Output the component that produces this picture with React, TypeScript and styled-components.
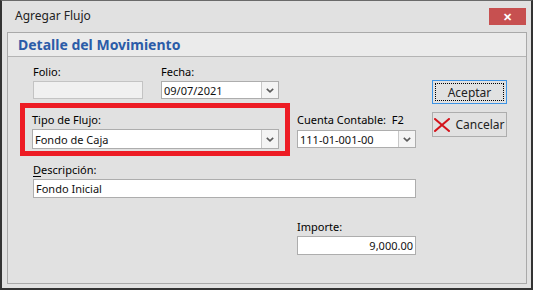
import styled, { createGlobalStyle } from "styled-components";

const GlobalStyle = createGlobalStyle`
  html, body {
    margin: 0;
    padding: 0;
    background: #e1e1e1;
  }
  body {
    font-family: "Noto Sans", "Open Sans", sans-serif;
    font-size: 11px;
    color: #000;
  }
`;

const Window = styled.div`
  width: 533px;
  height: 290px;
  box-sizing: border-box;
  background: #e1e1e1;
  border-top: 1px solid #6a6a6a;
  border-left: 2px solid #333;
  border-right: 2px solid #333;
  border-bottom: 2px solid #333;
  display: flex;
  flex-direction: column;
  overflow: hidden;
`;

const TitleBar = styled.div`
  height: 31px;
  display: flex;
  align-items: flex-start;
  justify-content: space-between;
  padding: 0 5px 0 13px;
`;

const Title = styled.span`
  font-size: 12px;
  line-height: 16px;
  margin-top: 7px;
  color: #222;
`;

const CloseButton = styled.div`
  width: 37px;
  height: 17px;
  margin-top: 7px;
  background: #c75050;
  display: flex;
  align-items: center;
  justify-content: center;
  color: #fff;
  font-weight: bold;
  font-size: 11px;
  line-height: 1;
`;

const Panel = styled.div`
  margin: 0 4px 0 5px;
  height: 250px;
  border: 1px solid #a9a9a9;
  display: flex;
  flex-direction: column;
`;

const PanelHeader = styled.div`
  height: 23px;
  background: #ebebeb;
  border-bottom: 1px solid #b4b4b4;
  padding-left: 10px;
  display: flex;
  align-items: center;
`;

const Heading = styled.span`
  font-size: 14px;
  font-weight: bold;
  color: #2b5ca8;
  line-height: 18px;
`;

const Body = styled.div`
  display: flex;
  padding: 7px 0 0 25px;
  gap: 16px;
`;

const FormArea = styled.div`
  width: 383px;
  display: flex;
  flex-direction: column;
`;

const Row = styled.div<{ $top?: number; $indent?: number }>`
  display: flex;
  align-items: flex-start;
  margin-top: ${(p) => p.$top ?? 0}px;
  margin-left: ${(p) => p.$indent ?? 0}px;
`;

const Field = styled.div<{ $w: number; $gap?: number; $top?: number }>`
  width: ${(p) => p.$w}px;
  display: flex;
  flex-direction: column;
  gap: ${(p) => p.$gap ?? 1}px;
  margin-top: ${(p) => p.$top ?? 0}px;
`;

const Label = styled.label`
  font-size: 11px;
  line-height: 16px;
  padding-left: 0;
  white-space: nowrap;
  u {
    text-decoration: underline;
    text-underline-offset: 2px;
  }
`;

const Box = styled.div<{ $h: number; $disabled?: boolean; $right?: boolean }>`
  height: ${(p) => p.$h}px;
  box-sizing: border-box;
  border: 1px solid ${(p) => (p.$disabled ? "#c3c3c3" : "#adadad")};
  background: ${(p) => (p.$disabled ? "#f0f0f0" : "#fff")};
  display: flex;
  align-items: stretch;
  font-size: 11px;
`;

const BoxText = styled.span<{ $right?: boolean }>`
  flex: 1;
  display: flex;
  align-items: center;
  justify-content: ${(p) => (p.$right ? "flex-end" : "flex-start")};
  padding: 0 2px;
  white-space: nowrap;
  color: #111;
`;

const DropButton = styled.span`
  width: 16px;
  border-left: 1px solid #c8c8c8;
  background: #f4f4f4;
  display: flex;
  align-items: center;
  justify-content: center;
`;

const Highlight = styled.div`
  width: 270px;
  box-sizing: border-box;
  margin-left: -13px;
  border: 5px solid #ed1c24;
  padding: 4px 6px 2px 7px;
`;

const Buttons = styled.div`
  width: 75px;
  margin-top: 16px;
  display: flex;
  flex-direction: column;
  gap: 8px;
`;

const Button = styled.div<{ $focused?: boolean }>`
  height: ${(p) => (p.$focused ? 24 : 25)}px;
  box-sizing: border-box;
  background: #e1e1e1;
  border: 1px solid ${(p) => (p.$focused ? "#3c93e4" : "#adadad")};
  padding: ${(p) => (p.$focused ? "2px" : "0")};
  display: flex;
  font-size: 12px;
  color: #222;
`;

const ButtonFace = styled.span<{ $focused?: boolean }>`
  flex: 1;
  display: flex;
  align-items: center;
  justify-content: center;
  gap: 5px;
  border: 1px dotted ${(p) => (p.$focused ? "#000" : "transparent")};
`;

function Chevron() {
  return (
    <svg width="8" height="5" viewBox="0 0 8 5">
      <path d="M0.8 0.8 L4 3.8 L7.2 0.8" fill="none" stroke="#5a5a5a" strokeWidth="1.6" />
    </svg>
  );
}

function RedX() {
  return (
    <svg width="16" height="14" viewBox="0 0 16 14">
      <path d="M1 1 L15 13 M15 1 L1 13" stroke="#d4131b" strokeWidth="2" strokeLinecap="square" />
    </svg>
  );
}

function Combo({ value, h }: { value: string; h: number }) {
  return (
    <Box $h={h}>
      <BoxText>{value}</BoxText>
      <DropButton>
        <Chevron />
      </DropButton>
    </Box>
  );
}

export default function App() {
  return (
    <>
      <GlobalStyle />
      <Window>
        <TitleBar>
          <Title>Agregar Flujo</Title>
          <CloseButton>✕</CloseButton>
        </TitleBar>
        <Panel>
          <PanelHeader>
            <Heading>Detalle del Movimiento</Heading>
          </PanelHeader>
          <Body>
            <FormArea>
              <Row>
                <Field $w={110}>
                  <Label>Folio:</Label>
                  <Box $h={18} $disabled />
                </Field>
                <Field $w={118} style={{ marginLeft: 18 }}>
                  <Label>Fecha:</Label>
                  <Combo value="09/07/2021" h={18} />
                </Field>
              </Row>
              <Row $top={4}>
                <Highlight>
                  <Field $w={247}>
                    <Label>Tipo de Flujo:</Label>
                    <Combo value="Fondo de Caja" h={20} />
                  </Field>
                </Highlight>
                <Field $w={119} $top={9} $gap={2} style={{ marginLeft: 7 }}>
                  <Label>Cuenta Contable:&nbsp; F2</Label>
                  <Combo value="111-01-001-00" h={18} />
                </Field>
              </Row>
              <Row $top={6}>
                <Field $w={383}>
                  <Label>
                    <u>D</u>escripción:
                  </Label>
                  <Box $h={19}>
                    <BoxText>Fondo Inicial</BoxText>
                  </Box>
                </Field>
              </Row>
              <Row $top={21} $indent={264}>
                <Field $w={119}>
                  <Label>Importe:</Label>
                  <Box $h={19}>
                    <BoxText $right>9,000.00</BoxText>
                  </Box>
                </Field>
              </Row>
            </FormArea>
            <Buttons>
              <Button $focused>
                <ButtonFace $focused>Aceptar</ButtonFace>
              </Button>
              <Button>
                <ButtonFace>
                  <RedX />
                  Cancelar
                </ButtonFace>
              </Button>
            </Buttons>
          </Body>
        </Panel>
      </Window>
    </>
  );
}
